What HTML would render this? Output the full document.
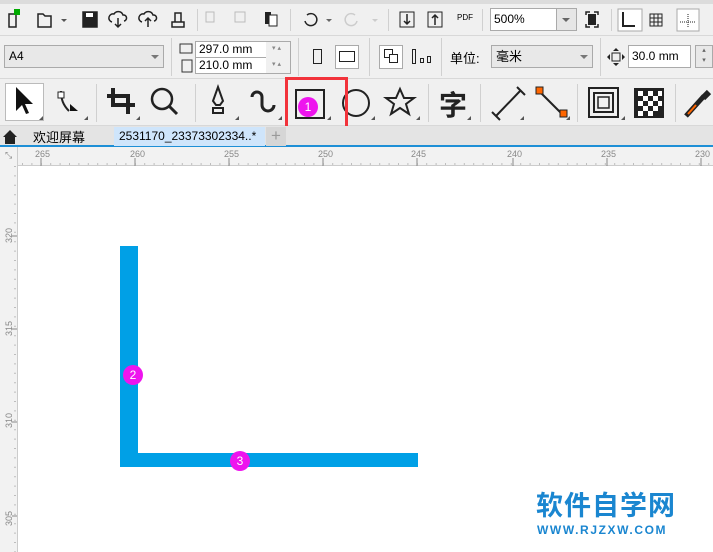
<!DOCTYPE html>
<html><head><meta charset="utf-8"><style>
*{margin:0;padding:0;box-sizing:border-box}
body{width:713px;height:552px;overflow:hidden;background:#fff;font-family:"Liberation Sans","Noto Sans CJK SC",sans-serif;position:relative}
.a{position:absolute}
.sep{position:absolute;width:1px;background:#d0d0d0}
.in{position:absolute;background:#fff;border:1px solid #aaa;font-size:12px;color:#000;padding-left:3px}
.ic{position:absolute}
.badge{position:absolute;width:20px;height:20px;border-radius:50%;background:#ee14ee;color:#fff;font-size:12px;text-align:center;line-height:20px}
</style></head><body>
<div class="a" style="left:0;top:0;width:713px;height:4px;background:#dcdcdc"></div>
<div class="a" style="left:0;top:4px;width:713px;height:122px;background:#f0f0f0"></div>
<div class="a" style="left:0;top:35px;width:713px;height:1px;background:#d8d8d8"></div>
<div class="a" style="left:0;top:78px;width:713px;height:1px;background:#d8d8d8"></div>
<div class="a" style="left:0;top:125px;width:713px;height:1px;background:#d8d8d8"></div>

<svg class="ic" style="left:0;top:4px" width="713" height="31" viewBox="0 4 713 31">
<g fill="none" stroke="#222" stroke-width="1.5">
<path d="M9 14h7v13H9z"/><rect x="14" y="9" width="6" height="6" fill="#0a0" stroke="none"/>
<path d="M38 14h5l2 2h6v11H38z"/><path d="M61 19l3 3 3-3z" fill="#555" stroke="none"/>
<rect x="83" y="12" width="14" height="15" fill="#222"/><rect x="86" y="13" width="7" height="4" fill="#fff" stroke="none"/>
<path d="M112 22a4 4 0 0 1 2-8 5 5 0 0 1 9 1 3 3 0 0 1 1 6M118 18v9M115 24l3 3 3-3"/>
<path d="M142 22a4 4 0 0 1 2-8 5 5 0 0 1 9 1 3 3 0 0 1 1 6M148 27v-9M145 21l3-3 3 3"/>
<path d="M172 22h12v5h-12zM175 22v-9h6v9"/>
</g>
<g fill="none" stroke="#bbb"><rect x="206" y="12" width="8" height="10"/><rect x="235" y="12" width="10" height="10"/></g>
<rect x="265" y="12" width="6" height="12" fill="#222"/><rect x="269" y="15" width="8" height="11" fill="#fff" stroke="#222"/>
<path d="M307 15a6 6 0 1 1-2 6" fill="none" stroke="#222" stroke-width="1.5"/><path d="M326 19l3 3 3-3z" fill="#666"/>
<path d="M355 15a6 6 0 1 0 2 6" fill="none" stroke="#ccc" stroke-width="1.5"/><path d="M372 19l3 3 3-3z" fill="#ccc"/>
<rect x="400" y="12" width="14" height="15" fill="none" stroke="#222"/><path d="M407 14v10M404 21l3 3 3-3" stroke="#222" fill="none" stroke-width="1.5"/>
<rect x="428" y="12" width="14" height="15" fill="none" stroke="#222"/><path d="M435 25v-10M432 18l3-3 3 3" stroke="#222" fill="none" stroke-width="1.5"/>
<text x="457" y="20" font-size="8" font-family="Liberation Sans">PDF</text>
<path d="M586 15v-3h4M594 12h4v3M598 24v3h-4M590 27h-4v-3" fill="none" stroke="#222" stroke-width="1.5"/><rect x="588" y="14" width="8" height="11" fill="#222"/>
<rect x="618" y="9" width="24" height="22" fill="#fff" stroke="#aaa"/><path d="M623 12v14h12" stroke="#222" fill="none" stroke-width="2"/>
<rect x="650" y="14" width="12" height="12" fill="none" stroke="#222"/><path d="M650 18h12M650 22h12M654 14v12M658 14v12" stroke="#222"/>
<rect x="677" y="9" width="22" height="22" fill="#fff" stroke="#aaa"/><path d="M688 14v14M680 22h16" stroke="#222" stroke-dasharray="1 1"/>
</svg>
<div class="sep" style="left:197px;top:9px;height:22px"></div>
<div class="sep" style="left:290px;top:9px;height:22px"></div>
<div class="sep" style="left:388px;top:9px;height:22px"></div>
<div class="sep" style="left:482px;top:9px;height:22px"></div>
<div class="sep" style="left:611px;top:9px;height:22px"></div>
<div class="in" style="left:490px;top:8px;width:87px;height:23px;line-height:21px">500%</div>
<div class="a" style="left:556px;top:9px;width:20px;height:21px;background:#e6e6e6;border-left:1px solid #aaa"></div>
<div class="a" style="left:562px;top:18px;border-left:4px solid transparent;border-right:4px solid transparent;border-top:4px solid #666;width:0"></div>

<div class="a" style="left:4px;top:45px;width:160px;height:23px;background:#e8e8e8;border:1px solid #aaa;font-size:12px;line-height:21px;padding-left:4px">A4</div>
<div class="a" style="left:151px;top:55px;border-left:4px solid transparent;border-right:4px solid transparent;border-top:4px solid #777;width:0"></div>
<div class="sep" style="left:171px;top:38px;height:38px"></div>
<div class="in" style="left:195px;top:41px;width:96px;height:17px;line-height:15px">297.0 mm</div>
<div class="in" style="left:195px;top:57px;width:96px;height:17px;line-height:15px">210.0 mm</div>
<div class="a" style="left:266px;top:42px;width:24px;height:31px;background:#f0f0f0"></div>
<div class="a" style="left:272px;top:44px;font-size:7px;color:#888">▾ ▴</div>
<div class="a" style="left:272px;top:60px;font-size:7px;color:#888">▾ ▴</div>
<svg class="ic" style="left:178px;top:40px" width="16" height="36"><rect x="2" y="4" width="12" height="9" fill="none" stroke="#333"/><rect x="4" y="20" width="10" height="12" fill="none" stroke="#333"/></svg>
<div class="sep" style="left:298px;top:38px;height:38px"></div>
<div class="a" style="left:313px;top:49px;width:9px;height:15px;border:1px solid #222"></div>
<div class="a" style="left:335px;top:45px;width:24px;height:24px;background:#fff;border:1px solid #aaa"></div>
<div class="a" style="left:339px;top:51px;width:16px;height:11px;border:1px solid #222"></div>
<div class="sep" style="left:369px;top:38px;height:38px"></div>
<div class="a" style="left:379px;top:45px;width:24px;height:24px;background:#fff;border:1px solid #aaa"></div>
<div class="a" style="left:384px;top:49px;width:9px;height:9px;border:1px solid #222"></div>
<div class="a" style="left:389px;top:54px;width:9px;height:9px;border:1px solid #222;background:#fff"></div>
<div class="a" style="left:412px;top:49px;width:4px;height:15px;border:1px solid #222"></div>
<div class="a" style="left:420px;top:58px;width:4px;height:5px;border:1px solid #222"></div>
<div class="a" style="left:427px;top:56px;width:4px;height:7px;border:1px solid #222"></div>
<div class="sep" style="left:441px;top:38px;height:38px"></div>
<div class="a" style="left:450px;top:48px;font-size:13px">单位:</div>
<div class="a" style="left:491px;top:45px;width:102px;height:23px;background:#e8e8e8;border:1px solid #aaa;font-size:13px;line-height:21px;padding-left:4px">毫米</div>
<div class="a" style="left:580px;top:55px;border-left:4px solid transparent;border-right:4px solid transparent;border-top:4px solid #777;width:0"></div>
<div class="sep" style="left:600px;top:38px;height:38px"></div>
<svg class="ic" style="left:607px;top:48px" width="18" height="18"><rect x="5" y="5" width="8" height="8" fill="none" stroke="#222"/><path d="M9 0l-3 3h6zM9 18l-3-3h6zM0 9l3-3v6zM18 9l-3-3v6z" fill="#222"/></svg>
<div class="in" style="left:628px;top:45px;width:63px;height:23px;line-height:21px">30.0 mm</div>
<div class="a" style="left:695px;top:45px;width:18px;height:23px;background:#e8e8e8;border:1px solid #aaa;font-size:7px;color:#666;text-align:center;line-height:10px">▴<br>▾</div>

<div class="a" style="left:5px;top:83px;width:39px;height:38px;background:#fff;border:1px solid #bbb"></div>
<svg class="ic" style="left:0;top:79px" width="713" height="46">
<path d="M16 8v24l6-6 4 9 3-1-4-9h8z" fill="#111"/>
<path d="M61 12c0 8 2 14 8 20" fill="none" stroke="#222" stroke-width="2"/><rect x="58" y="13" width="6" height="6" fill="#fff" stroke="#222"/><path d="M70 25l8 7h-8z" fill="#111"/>
<path d="M107 17h21v18M113 9v17h22" fill="none" stroke="#222" stroke-width="4"/>
<circle cx="162" cy="20" r="10" fill="none" stroke="#222" stroke-width="2.5"/><path d="M169 27l8 8" stroke="#222" stroke-width="3"/>
<path d="M218 8l-5 14 3 4h4l3-4z M213 29h10v5h-10z" fill="none" stroke="#222" stroke-width="2"/>
<path d="M252 18a5 5 0 0 1 10 0v8a6 6 0 0 0 12 0" fill="none" stroke="#222" stroke-width="3"/>
<rect x="296" y="11" width="28" height="28" fill="none" stroke="#222" stroke-width="2"/>
<circle cx="356" cy="24" r="13" fill="none" stroke="#222" stroke-width="2"/>
<path d="M400 10l4 9h10l-8 6 3 10-9-6-9 6 3-10-8-6h10z" fill="none" stroke="#222" stroke-width="2"/>
<text x="439" y="36" font-size="28" font-weight="bold" fill="#222" font-family="Noto Sans CJK SC">字</text>
<path d="M496 37l25-26M492 33l8 8M517 8l8 8" stroke="#222" stroke-width="2"/>
<path d="M540 13l22 22" stroke="#222" stroke-width="2"/><rect x="536" y="8" width="7" height="7" fill="#f60" stroke="#222"/><rect x="560" y="31" width="7" height="7" fill="#f60" stroke="#222"/>
<rect x="589" y="9" width="29" height="29" fill="none" stroke="#222" stroke-width="2"/><rect x="594" y="14" width="19" height="19" fill="none" stroke="#222" stroke-width="2"/><rect x="598" y="18" width="11" height="11" fill="none" stroke="#222" stroke-width="1.5"/>
<rect x="634" y="9" width="30" height="30" fill="#222"/>
<g fill="#fff"><rect x="638" y="12" width="5" height="5"/><rect x="648" y="12" width="5" height="5"/><rect x="658" y="12" width="4" height="5"/><rect x="643" y="17" width="5" height="5"/><rect x="653" y="17" width="5" height="5"/><rect x="638" y="22" width="5" height="5"/><rect x="648" y="22" width="5" height="5"/><rect x="658" y="22" width="4" height="5"/><rect x="643" y="27" width="5" height="5"/><rect x="653" y="27" width="5" height="5"/><rect x="638" y="32" width="5" height="5"/><rect x="648" y="32" width="5" height="5"/></g>
<path d="M686 37l18-20" stroke="#222" stroke-width="5"/><path d="M688 35l8-9" stroke="#f60" stroke-width="2"/><path d="M703 19l6-6" stroke="#222" stroke-width="6"/>
<g fill="#555"><path d="M43 41l-4 0 4-4z"/><path d="M88 41h-4l4-4z"/><path d="M140 41h-4l4-4z"/><path d="M239 41h-4l4-4z"/><path d="M282 41h-4l4-4z"/><path d="M331 41h-4l4-4z"/><path d="M375 41h-4l4-4z"/><path d="M420 41h-4l4-4z"/><path d="M471 41h-4l4-4z"/><path d="M524 41h-4l4-4z"/><path d="M570 41h-4l4-4z"/><path d="M625 41h-4l4-4z"/></g>
</svg>
<div class="sep" style="left:96px;top:84px;height:38px"></div>
<div class="sep" style="left:195px;top:84px;height:38px"></div>
<div class="sep" style="left:428px;top:84px;height:38px"></div>
<div class="sep" style="left:480px;top:84px;height:38px"></div>
<div class="sep" style="left:577px;top:84px;height:38px"></div>
<div class="sep" style="left:675px;top:84px;height:38px"></div>
<div class="a" style="left:285px;top:77px;width:63px;height:57px;border:3px solid #f2333b"></div>
<div class="badge" style="left:298px;top:97px">1</div>

<div class="a" style="left:0;top:126px;width:713px;height:20px;background:#e4e4e4"></div>
<div class="a" style="left:0;top:145px;width:713px;height:2px;background:#1e8fd6"></div>
<svg class="ic" style="left:2px;top:129px" width="16" height="16"><path d="M8 1l7 7h-2v7H3V8H1z" fill="#222"/></svg>
<div class="a" style="left:33px;top:127px;font-size:13px">欢迎屏幕</div>
<div class="a" style="left:114px;top:127px;width:151px;height:19px;background:#cfe5fb;font-size:12px;line-height:19px;padding-left:5px">2531170_23373302334..*</div>
<div class="a" style="left:266px;top:127px;width:20px;height:19px;background:#d6d6d6;color:#999;font-size:17px;text-align:center;line-height:18px">+</div>

<div class="a" style="left:0;top:147px;width:713px;height:19px;background:#f2f2f2;border-bottom:1px solid #ccc"></div>
<div class="a" style="left:0;top:147px;width:18px;height:405px;background:#f2f2f2;border-right:1px solid #ccc"></div>
<div class="a" style="left:5px;top:150px;font-size:9px;color:#888">⤡</div>
<svg class="ic" style="left:0;top:147px" width="713" height="20">
<g font-size="9" fill="#888" font-family="Liberation Sans"><text x="35" y="10">265</text><text x="130" y="10">260</text><text x="224" y="10">255</text><text x="318" y="10">250</text><text x="411" y="10">245</text><text x="507" y="10">240</text><text x="601" y="10">235</text><text x="695" y="10">230</text></g>
<g stroke="#888"><path d="M41 11v8M135 11v8M229 11v8M323 11v8M417 11v8M513 11v8M607 11v8M701 11v8"/></g>
<path d="M22 17h690" stroke="#888" stroke-dasharray="1 8.4"/>
</svg>
<svg class="ic" style="left:0;top:166px" width="18" height="386">
<g font-size="9" fill="#888" font-family="Liberation Sans"><text transform="translate(12,77) rotate(-90)">320</text><text transform="translate(12,170) rotate(-90)">315</text><text transform="translate(12,262) rotate(-90)">310</text><text transform="translate(12,360) rotate(-90)">305</text></g>
<g stroke="#888"><path d="M12 70h5M12 163h5M12 256h5M12 350h5"/></g>
<path d="M15 0v386" stroke="#888" stroke-dasharray="1 8.4"/>
</svg>

<div class="a" style="left:120px;top:246px;width:18px;height:221px;background:#00a0e6"></div>
<div class="a" style="left:120px;top:453px;width:298px;height:14px;background:#00a0e6"></div>
<div class="badge" style="left:123px;top:365px">2</div>
<div class="badge" style="left:230px;top:451px">3</div>

<div class="a" style="left:536px;top:489px;font-size:27px;font-weight:bold;color:#1a86d0;letter-spacing:1px;font-family:'Noto Sans CJK SC',sans-serif;line-height:30px">软件自学网</div>
<div class="a" style="left:537px;top:523px;font-size:12px;font-weight:bold;color:#1a86d0;letter-spacing:1.6px">WWW.RJZXW.COM</div>
</body></html>
